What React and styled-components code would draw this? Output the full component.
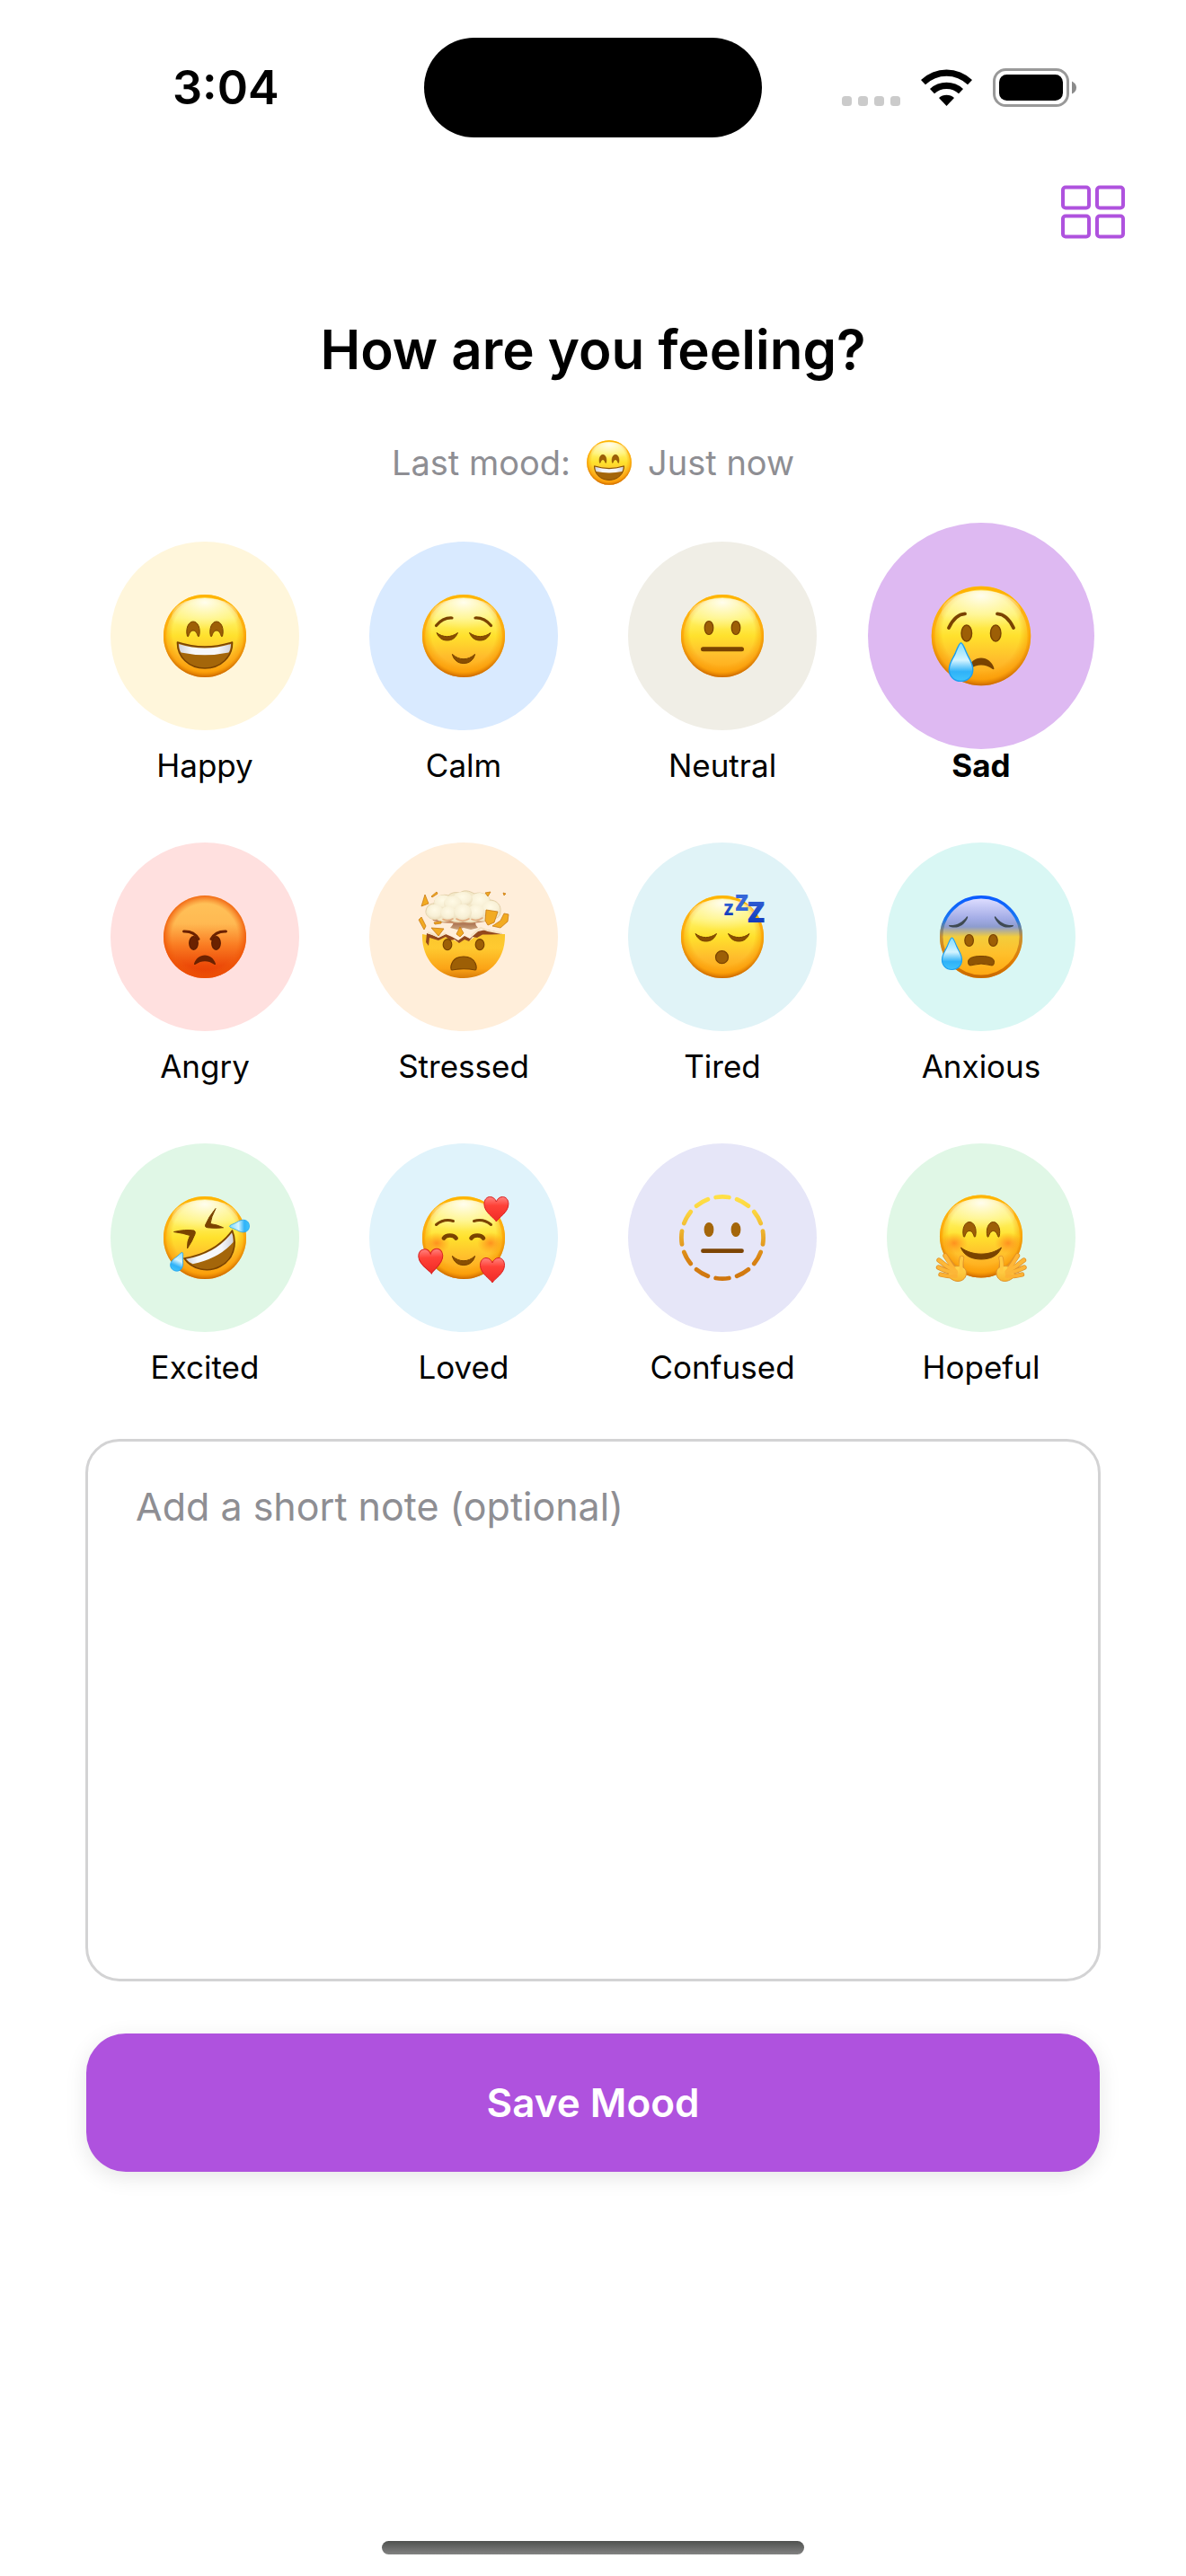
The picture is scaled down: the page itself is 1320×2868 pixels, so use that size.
import React, { useState } from "react";
import styled, { createGlobalStyle } from "styled-components";

const GlobalStyle = createGlobalStyle`
  *, *::before, *::after { box-sizing: border-box; }
  body {
    margin: 0;
    background: #fff;
    color: #000;
    font-family: Inter, Roboto, "Liberation Sans", sans-serif;
  }
  button, textarea { font: inherit; }
`;

const Screen = styled.div`
  display: flex;
  flex-direction: column;
  min-height: 100vh;
`;

const StatusBar = styled.header`
  display: grid;
  grid-template-columns: 1fr 376px 1fr;
  align-items: center;
  padding-top: 42px;
`;

const Time = styled.time`
  padding-left: 192px;
  font-size: 52px;
  font-weight: 600;
  line-height: 60px;
`;

const Island = styled.div`
  height: 111px;
  border-radius: 56px;
  background: #000;
`;

const StatusIcons = styled.div`
  display: flex;
  justify-content: flex-end;
  align-items: center;
  gap: 23px;
  padding-right: 122px;
`;

const Toolbar = styled.nav`
  display: flex;
  justify-content: flex-end;
  padding: 53px 67px 0;
`;

const IconButton = styled.button`
  display: flex;
  padding: 0;
  border: 0;
  background: none;
  color: #af52de;
  cursor: pointer;
`;

const Main = styled.main`
  display: flex;
  flex-direction: column;
  padding: 81px 95px 0;
`;

const Title = styled.h1`
  margin: 0;
  font-size: 60px;
  font-weight: 600;
  line-height: 84px;
  text-align: center;
`;

const LastMood = styled.p`
  display: flex;
  justify-content: center;
  align-items: center;
  gap: 16px;
  margin: 56px 0 0;
  color: #8e8e93;
  font-size: 38px;
  line-height: 56px;
`;

const MoodGrid = styled.div`
  display: grid;
  grid-template-columns: repeat(4, 1fr);
  gap: 60px 48px;
  margin-top: 60px;
  padding: 0 13px;
`;

const MoodButton = styled.button`
  display: flex;
  flex-direction: column;
  align-items: center;
  gap: 13px;
  padding: 0;
  border: 0;
  background: none;
  color: #000;
  cursor: pointer;
`;

const MoodCircle = styled.span`
  display: flex;
  align-items: center;
  justify-content: center;
  width: 210px;
  height: 210px;
  border-radius: 50%;
  background: ${(p) => p.$color};
  transform: ${(p) => (p.$selected ? "scale(1.2)" : "none")};
`;

const MoodLabel = styled.span`
  position: relative;
  font-size: 35px;
  font-weight: ${(p) => (p.$selected ? 700 : 400)};
  line-height: 52px;
`;

const NoteField = styled.textarea`
  display: block;
  width: 100%;
  height: 604px;
  margin-top: 54px;
  padding: 42px 53px;
  border: 3px solid #d3d3d4;
  border-radius: 38px;
  outline: none;
  resize: none;
  background: #fff;
  color: #000;
  font-size: 43px;
  line-height: 60px;
  &::placeholder { color: #8e8e93; opacity: 1; }
`;

const SaveButton = styled.button`
  height: 154px;
  margin: 58px 1px 0;
  border: 0;
  border-radius: 44px;
  background: #af52de;
  color: #fff;
  font-size: 44px;
  font-weight: 600;
  line-height: 60px;
  box-shadow: 0 6px 24px rgba(0, 0, 0, 0.1);
  cursor: pointer;
`;

const HomeIndicator = styled.div`
  width: 470px;
  height: 15px;
  margin: auto auto 24px;
  border-radius: 8px;
  background: linear-gradient(#4f514f, #828282);
`;

const FaceSvg = styled.svg`
  display: block;
  flex: none;
  overflow: visible;
`;

const Defs = styled.svg`
  position: absolute;
`;

const BROWN = "#7a4300";
const EYE = "#9d5f06";

const SharedGradients = () => (
  <Defs width="0" height="0" aria-hidden="true">
    <defs>
      <linearGradient id="skin" x1="0" y1="0" x2="0" y2="1">
        <stop offset="0" stopColor="#fff07a" />
        <stop offset="0.28" stopColor="#fff36b" />
        <stop offset="0.5" stopColor="#ffe12d" />
        <stop offset="0.75" stopColor="#ffbc2c" />
        <stop offset="1" stopColor="#ffa30d" />
      </linearGradient>
      <radialGradient id="rim" cx="0.5" cy="0.46" r="0.54">
        <stop offset="0.72" stopColor="#f59300" stopOpacity="0" />
        <stop offset="0.88" stopColor="#f89600" stopOpacity="0.5" />
        <stop offset="1" stopColor="#c96600" stopOpacity="1" />
      </radialGradient>
      <linearGradient id="rimTop" x1="0" y1="0" x2="0" y2="1">
        <stop offset="0" stopColor="#ffb400" />
        <stop offset="0.5" stopColor="#ff9d00" stopOpacity="0.5" />
        <stop offset="0.8" stopColor="#e87f00" stopOpacity="0" />
      </linearGradient>
      <radialGradient id="shine" cx="0.5" cy="0.12" r="0.75">
        <stop offset="0" stopColor="#fffef4" stopOpacity="0.95" />
        <stop offset="1" stopColor="#fffad0" stopOpacity="0" />
      </radialGradient>
      <linearGradient id="angrySkin" x1="0" y1="0" x2="0" y2="1">
        <stop offset="0" stopColor="#ffc45a" />
        <stop offset="0.34" stopColor="#ffb952" />
        <stop offset="0.6" stopColor="#fa7c22" />
        <stop offset="0.85" stopColor="#ec4a08" />
        <stop offset="1" stopColor="#e53c00" />
      </linearGradient>
      <radialGradient id="angryRim" cx="0.5" cy="0.5" r="0.5">
        <stop offset="0.8" stopColor="#f26510" stopOpacity="0" />
        <stop offset="1" stopColor="#ee5206" stopOpacity="0.8" />
      </radialGradient>
      <linearGradient id="anxiousSkin" x1="0" y1="0" x2="0" y2="1">
        <stop offset="0.04" stopColor="#dcdcff" />
        <stop offset="0.28" stopColor="#a3ace6" />
        <stop offset="0.38" stopColor="#8d9cce" />
        <stop offset="0.5" stopColor="#f3cd3c" />
        <stop offset="0.7" stopColor="#ffc02b" />
        <stop offset="1" stopColor="#ffa50f" />
      </linearGradient>
      <linearGradient id="anxiousEdge" x1="0" y1="0" x2="0" y2="1">
        <stop offset="0" stopColor="#0b5cff" />
        <stop offset="0.28" stopColor="#1878f2" />
        <stop offset="0.5" stopColor="#c99032" />
        <stop offset="0.8" stopColor="#e17c00" />
        <stop offset="1" stopColor="#c96a00" />
      </linearGradient>
      <linearGradient id="teeth" x1="0" y1="0" x2="1" y2="0">
        <stop offset="0" stopColor="#d2d3da" />
        <stop offset="0.25" stopColor="#f6f7fa" />
        <stop offset="0.75" stopColor="#f6f7fa" />
        <stop offset="1" stopColor="#d2d3da" />
      </linearGradient>
      <linearGradient id="tear" x1="0" y1="0" x2="0" y2="1">
        <stop offset="0" stopColor="#7fdcff" />
        <stop offset="0.45" stopColor="#d4f4ff" />
        <stop offset="0.75" stopColor="#2fb2f8" />
        <stop offset="1" stopColor="#3fc4fb" />
      </linearGradient>
      <radialGradient id="blush">
        <stop offset="0" stopColor="#ff7a1a" stopOpacity="0.75" />
        <stop offset="1" stopColor="#ff8a1a" stopOpacity="0" />
      </radialGradient>
      <linearGradient id="heart" x1="0" y1="0" x2="0" y2="1">
        <stop offset="0" stopColor="#ff8480" />
        <stop offset="0.35" stopColor="#ff4238" />
        <stop offset="1" stopColor="#f02a26" />
      </linearGradient>
      <linearGradient id="dashes" gradientUnits="userSpaceOnUse" x1="0" y1="4" x2="0" y2="96">
        <stop offset="0" stopColor="#ffe047" />
        <stop offset="0.2" stopColor="#fbd33f" />
        <stop offset="0.75" stopColor="#d98414" />
        <stop offset="1" stopColor="#cf760f" />
      </linearGradient>
      <radialGradient id="puff" cx="0.48" cy="0.36" r="0.64">
        <stop offset="0" stopColor="#fffae6" />
        <stop offset="0.65" stopColor="#f8f0d6" />
        <stop offset="1" stopColor="#eadbb8" />
      </radialGradient>
      <linearGradient id="stem" x1="0" y1="0" x2="0" y2="1">
        <stop offset="0" stopColor="#8f4526" />
        <stop offset="1" stopColor="#c9a27c" />
      </linearGradient>
      <linearGradient id="bowl" x1="0" y1="0" x2="0" y2="1">
        <stop offset="0" stopColor="#f9c52c" />
        <stop offset="0.35" stopColor="#ffca30" />
        <stop offset="0.8" stopColor="#fba316" />
        <stop offset="1" stopColor="#d87c0a" />
      </linearGradient>
      <linearGradient id="hand" x1="0" y1="0" x2="0" y2="1">
        <stop offset="0" stopColor="#ffd84e" />
        <stop offset="1" stopColor="#f9b42c" />
      </linearGradient>
      <linearGradient id="zed" x1="0" y1="0" x2="0" y2="1">
        <stop offset="0" stopColor="#3a6bdc" />
        <stop offset="1" stopColor="#0a2fb4" />
      </linearGradient>
    </defs>
  </Defs>
);

const Skin = ({ cy = 50 }) => (
  <g>
    <circle cx="50" cy={cy} r="46" fill="url(#skin)" />
    <circle cx="50" cy={cy} r="46" fill="url(#rim)" />
    <circle cx="50" cy={cy} r="44.5" fill="none" stroke="url(#rimTop)" strokeWidth="3" />
    <ellipse cx="50" cy={cy - 22} rx="37" ry="20" fill="url(#shine)" />
  </g>
);

const OvalEyes = ({ cy, dx = 15, rx = 5.3, ry = 8, fill = EYE, edge = BROWN }) => (
  <g fill={fill} stroke={edge} strokeWidth="1.2">
    <ellipse cx={50 - dx} cy={cy} rx={rx - 0.5} ry={ry - 0.5} />
    <ellipse cx={50 + dx} cy={cy} rx={rx - 0.5} ry={ry - 0.5} />
  </g>
);

const SmilingEye = ({ x, y }) => (
  <path
    transform={`translate(${x} ${y})`}
    d="M-6.6 8 C-8.6 0 -5.4 -8 0 -8 C5.4 -8 8.6 0 6.6 8 C6.2 9 5.6 9 5.2 8 C4 4.4 2.6 2 0 2 C-2.6 2 -4 4.4 -5.2 8 C-5.6 9 -6.2 9 -6.6 8Z"
    fill={EYE}
    stroke={BROWN}
    strokeWidth="1"
  />
);

const ClosedEyes = () => (
  <g fill="#8a4f02" stroke={BROWN} strokeWidth="1" strokeLinejoin="round">
    <path d="M20 46.5 C27 52 36 52 43.5 46.5 C41 52.5 37 55 31.7 55 C26.5 55 22.5 52.5 20 46.5Z" />
    <path d="M80 46.5 C73 52 64 52 56.5 46.5 C59 52.5 63 55 68.3 55 C73.5 55 77.5 52.5 80 46.5Z" />
  </g>
);

const SmallSmile = () => (
  <path
    d="M37.4 70.4 C45 77.5 55 77.5 62.6 70.4 C61 77 56 80.6 50 80.6 C44 80.6 39 77 37.4 70.4Z"
    fill="#8a4f02"
    stroke={BROWN}
    strokeWidth="1"
    strokeLinejoin="round"
  />
);

const Frown = ({ fill = "#7a4300" }) => (
  <path
    d="M38 80 C40 74 44.5 70.5 50 70.5 C55.5 70.5 60 74 62 80 C62.2 81.5 61 81.3 60 80.5 C54 76 46 76 40 80.5 C39 81.3 37.8 81.5 38 80Z"
    fill={fill}
  />
);

const Tear = ({ x, y, scale = 1, rotate = 0 }) => (
  <path
    transform={`translate(${x} ${y}) rotate(${rotate}) scale(${scale})`}
    d="M0 0 C1.5 0 3 4 5 9 C7.5 15 11 18.5 11 24.5 C11 31 6.5 35.5 0 35.5 C-6.5 35.5 -11 31 -11 24.5 C-11 18.5 -7.5 15 -5 9 C-3 4 -1.5 0 0 0Z"
    fill="url(#tear)"
    stroke="#1c9ff0"
    strokeWidth="1.2"
  />
);

const Heart = ({ x, y, rotate = 0 }) => (
  <path
    transform={`translate(${x} ${y}) rotate(${rotate})`}
    d="M0 14 C-2 10 -13.5 4 -13.5 -5.5 C-13.5 -10.5 -10.5 -13.5 -7 -13.5 C-3.5 -13.5 -1 -11 0 -8 C1 -11 3.5 -13.5 7 -13.5 C10.5 -13.5 13.5 -10.5 13.5 -5.5 C13.5 4 2 10 0 14Z"
    fill="url(#heart)"
    stroke="#d92020"
    strokeWidth="1"
  />
);

const Blush = ({ cy = 56 }) => (
  <g fill="url(#blush)">
    <ellipse cx="20" cy={cy} rx="15" ry="12" />
    <ellipse cx="80" cy={cy} rx="15" ry="12" />
  </g>
);

const HugHand = () => (
  <g>
    <g fill="none" stroke="#e0922a" strokeWidth="5.4" strokeLinecap="round">
      <path d="M22 86 Q15 78 10 70" />
      <path d="M20 87 Q11 82 3 75" />
      <path d="M19 89 Q10 87 2.5 83" />
      <path d="M20 93 Q12 93 5 91" />
      <path d="M29 86 Q27 78 28.500 72.500" />
    </g>
    <path d="M18 83 C24 80 33 82 33.5 88 C34 94 30 98.5 24 98.5 C19 98.5 13 94 13 91Z" fill="url(#hand)" stroke="#e0922a" strokeWidth="1" />
    <g fill="none" strokeWidth="3.8" strokeLinecap="round">
      <path d="M22 88 Q15 79 10 70" stroke="#ffb636" />
      <path d="M22 88 Q11 82 3 75" stroke="#fdb838" />
      <path d="M22 90 Q10 87 2.5 83" stroke="#fcb638" />
      <path d="M22 93 Q12 93 5 91" stroke="#fcb234" />
      <path d="M28 88 Q27 78 28.5 72.5" stroke="#ffc840" />
    </g>
  </g>
);

const faces = {
  Happy: (
    <>
      <Skin />
      <SmilingEye x={37} y={42} />
      <SmilingEye x={63} y={42} />
      <path d="M19.5 57 Q50 67 80.5 57 C81 73 68 86 50 86 C32 86 19 73 19.5 57Z" fill="#a4660a" stroke={BROWN} strokeWidth="1.6" strokeLinejoin="round" />
      <path d="M21 59 Q50 68 79 59 C78.8 63 78 66.5 76.5 68.5 Q50 74 23.5 68.5 C22 66.5 21.2 63 21 59Z" fill="url(#teeth)" />
    </>
  ),
  Calm: (
    <>
      <Skin />
      <g fill="none" stroke={BROWN} strokeWidth="3.2" strokeLinecap="round">
        <path d="M19.5 38.5 Q27 29.5 37 30" />
        <path d="M80.5 38.5 Q73 29.5 63 30" />
      </g>
      <ClosedEyes />
      <SmallSmile />
    </>
  ),
  Neutral: (
    <>
      <Skin />
      <OvalEyes cy={41} />
      <path d="M28.5 64.7 H71.5" stroke={BROWN} strokeWidth="5" strokeLinecap="round" />
    </>
  ),
  Sad: (
    <>
      <Skin />
      <g fill="none" stroke={BROWN} strokeWidth="3.2" strokeLinecap="round">
        <path d="M20 42.5 Q26 30 35 29.5" />
        <path d="M80 42.5 Q74 30 65 29.5" />
      </g>
      <OvalEyes cy={47.5} dx={13.5} />
      <Frown />
      <Tear x={31.3} y={56.5} />
    </>
  ),
  Angry: (
    <>
      <circle cx="50" cy="50" r="46" fill="url(#angrySkin)" />
      <circle cx="50" cy="50" r="46" fill="url(#angryRim)" />
      <OvalEyes cy={57} dx={12.5} ry={7.8} fill="#6b2100" edge="#5c1c00" />
      <g fill="none" stroke="#6b2100" strokeWidth="3" strokeLinecap="round">
        <path d="M26.5 44 Q38 43.5 43 52.5" />
        <path d="M73.5 44 Q62 43.5 57 52.5" />
      </g>
      <Frown fill="#6b2100" />
    </>
  ),
  Stressed: (
    <>
      <path d="M4 47 L14 49 L22 53 L30 50 L36 52 L44 56 L51 51 L57 54 L66 47 L75 44 L85 47 L96 47 C97 76 77 96 50 96 C23 96 3 76 4 47Z" fill="url(#bowl)" />
      <path d="M9 46 L15 48 L22 51 L30 47 L37 50 L44 54 L51 49 L57 52 L66 44 L75 42 L85 44 L93 47 L80 47.500 L71 47.500 L65 51 L60 50 L56 55 L51 53 L45 57 L40 53 L35 54 L30 50 L22 54 L12 51 L11 60 L8 56Z" fill="#93481d" />
      <path d="M10 45 L16 47 L22 50 L30 46 M58 49 L69 40 L77 43 L92 46" fill="none" stroke="#f6e3c4" strokeWidth="2" />
      <path d="M39 28 H64 Q61 35 66 40 L58 42 L50 40 L43 42 L35 40 Q40 36 39 28Z" fill="url(#stem)" />
      <path d="M12 24 Q50 38 86 24 L80 31 Q66 36 50 34.500 Q28 36 16 32Z" fill="#c98f68" />
      <path d="M17 13 C18 4 28 2 33 4 C38 -1 44 1 46 1 C52 -4 60 1 62 2 C70 -1 79 4 79 9 C87 9 92 15 91 22 C91 28 86 31 80 29 C76 34 69 33 66 32 C61 35 54 34 49 33 C43 35 37 33 35 31 C29 35 22 33 20 30 C12 32 7 25 8 21 C9 15 13 13 17 13Z" fill="#f3e8c8" stroke="#dcc79c" strokeWidth="0.8" />
      <g fill="url(#puff)">
        <ellipse cx="27" cy="11.5" rx="10" ry="8" />
        <ellipse cx="68" cy="11" rx="11.5" ry="10" />
        <ellipse cx="49" cy="8" rx="11" ry="8" />
        <ellipse cx="80" cy="19.500" rx="10.500" ry="9.500" />
        <ellipse cx="18" cy="22.500" rx="9.500" ry="8.500" />
        <ellipse cx="38" cy="13" rx="10" ry="8.5" />
        <ellipse cx="33" cy="24" rx="9" ry="8" />
        <ellipse cx="64" cy="23" rx="9.500" ry="9" />
        <ellipse cx="49" cy="23" rx="10" ry="9.5" />
      </g>
      <path d="M42 30 Q49 34 56 30 M27 30.500 Q32 33 38 30 M59 30.500 Q65 33 71 29" fill="none" stroke="#e2ac80" strokeWidth="1.6" strokeLinecap="round" />
      <g fill="#f2ab22" stroke="#c97a12" strokeWidth="0.8" strokeLinejoin="round">
        <path d="M3 16 L7 3 L11 13Z" />
        <path d="M14 5 L20 0 L21 2 L15 6Z" />
        <path d="M74 1 L80 0 L77 5Z" />
        <path d="M94 1 L97 2 L95 4Z" />
        <path d="M75 20 L88 22 L84 34 L77 37 L74 32Z" />
        <path d="M82 38 L91 32 L95 24 L100 25 L99 33 L91 40Z" />
        <path d="M0 31 L3 28 L8 38 L6 42Z" />
        <path d="M14 40 L28 41 L22 49Z" />
        <path d="M42 47 L46 39 L50 46 L46 50Z" />
        <path d="M17 34 L25 33 L25 35 L18 36Z" />
      </g>
      <OvalEyes cy={58.7} dx={18} ry={6.5} />
      <path d="M37 87 C34.5 87 35 72 50 72 C65 72 65.5 87 63 87 Q50 84.5 37 87Z" fill={EYE} stroke={BROWN} strokeWidth="1.2" />
    </>
  ),
  Tired: (
    <>
      <Skin />
      <ClosedEyes />
      <ellipse cx="49.5" cy="72.7" rx="7" ry="7" fill={EYE} stroke={BROWN} strokeWidth="1.2" />
      <g fill="url(#zed)" fontFamily="'Open Sans', sans-serif" fontWeight="800" textAnchor="middle">
        <text x="57" y="26" fontSize="17">Z</text>
        <text x="71.5" y="21" fontSize="24" fill="#3566d8">Z</text>
        <text x="87.5" y="34" fontSize="32">Z</text>
      </g>
    </>
  ),
  Anxious: (
    <>
      <circle cx="50" cy="50" r="46" fill="url(#anxiousSkin)" />
      <circle cx="50" cy="50" r="44.3" fill="none" stroke="url(#anxiousEdge)" strokeWidth="3.4" />
      <g fill="#3f4a52">
        <path d="M14.5 37 C23 37.5 29 34 34 27.5 C35 27 35.5 28 35 29 C31 37.5 24 41 16 39 C14 38.5 13.5 37.3 14.5 37Z" />
        <path d="M85.5 37 C77 37.5 71 34 66 27.5 C65 27 64.5 28 65 29 C69 37.5 76 41 84 39 C86 38.5 86.5 37.3 85.5 37Z" />
      </g>
      <OvalEyes cy={54} dx={13.4} ry={7} />
      <path d="M36 80.5 C33.5 74 40 71.5 50 71.5 C60 71.5 66.5 74 64 80.5 C63.5 82.5 61 82 59 81.3 Q50 78.8 41 81.3 C39 82 36.5 82.5 36 80.5Z" fill="#8f5404" stroke={BROWN} strokeWidth="1" />
      <Tear x={17.5} y={51} />
    </>
  ),
  Excited: (
    <>
      <Skin />
      <g fill={BROWN} stroke={BROWN} strokeWidth="1" strokeLinejoin="round">
        <path d="M15.5 43.5 Q28 40.5 38 42 Q40 43 39 46 Q36 54 30.5 62 Q30 54 33.5 47.5 Q26 45 15.5 43.5Z" />
        <path d="M62 17.5 Q54 27 50.5 36 Q50 38.5 53 38.8 Q62 39.8 70.5 38.8 Q64 35.5 56 34.5 Q57 27 62 17.5Z" />
      </g>
      <path d="M27 73 Q62 67 80.5 42 C87 58 81 75 67 82 C54 89 36 86 27 73Z" fill="#a4660a" stroke={BROWN} strokeWidth="1.6" strokeLinejoin="round" />
      <path d="M29 73.8 Q62 68 80 44.5 Q82 49 81.5 55 Q66 73 36.5 79.3 Q32 77.5 29 73.8Z" fill="url(#teeth)" />
      <Tear x={77.5} y={37.3} scale={0.62} rotate={-91} />
      <Tear x={25} y={66.5} scale={0.62} rotate={25} />
    </>
  ),
  Loved: (
    <>
      <Skin />
      <Blush />
      <g fill="none" stroke={BROWN} strokeLinecap="round" strokeWidth="3">
        <path d="M19.5 35.5 Q28 28.5 38.5 31.5" />
        <path d="M80.5 35.5 Q72 28.5 61.5 31.5" />
        <path d="M28 50.5 C30.5 46.5 39 46.5 41.5 50.5" strokeWidth="4.6" />
        <path d="M58.5 50.5 C61 46.5 69.5 46.5 72 50.5" strokeWidth="4.6" />
      </g>
      <SmallSmile />
      <Heart x={86.4} y={18} />
      <Heart x={13.6} y={76} rotate={-3} />
      <Heart x={82} y={86} />
    </>
  ),
  Confused: (
    <>
      <circle cx="50" cy="50" r="45.6" fill="none" stroke="url(#dashes)" strokeWidth="4.8" strokeLinecap="round" pathLength="120" strokeDasharray="6.2 3.8" strokeDashoffset="3.1" />
      <OvalEyes cy={41} fill="#a4660a" edge="#a4660a" />
      <path d="M28.5 64.7 H71.5" stroke="#7d4505" strokeWidth="4.8" strokeLinecap="round" />
    </>
  ),
  Hopeful: (
    <>
      <Skin cy={48.5} />
      <Blush />
      <SmilingEye x={37} y={40.5} />
      <SmilingEye x={63.5} y={40.5} />
      <path d="M27.5 61 C40 70.5 60 70.5 72.5 61 C69 70.5 60 74 50 74 C40 74 31 70.5 27.5 61Z" fill="#7a4300" stroke={BROWN} strokeWidth="1" strokeLinejoin="round" />
      <HugHand />
      <g transform="translate(100.5 0) scale(-1 1)">
        <HugHand />
      </g>
    </>
  ),
};

const Face = ({ name, size }) => (
  <FaceSvg width={size} height={size} viewBox="0 0 100 100" aria-hidden="true">
    {faces[name]}
  </FaceSvg>
);

const moods = [
  { name: "Happy", color: "#fff6db" },
  { name: "Calm", color: "#d9eaff" },
  { name: "Neutral", color: "#f0eee6" },
  { name: "Sad", color: "#deb9f2" },
  { name: "Angry", color: "#ffe0df" },
  { name: "Stressed", color: "#ffeeda" },
  { name: "Tired", color: "#e0f3f7" },
  { name: "Anxious", color: "#d9f7f4" },
  { name: "Excited", color: "#e0f7e6" },
  { name: "Loved", color: "#e0f3fb" },
  { name: "Confused", color: "#e6e6f8" },
  { name: "Hopeful", color: "#e0f7e6" },
];

const SignalDots = () => (
  <svg width="65" height="43" viewBox="0 0 65 43" fill="#cbcbcb" aria-hidden="true">
    {[0, 18, 36, 54].map((x) => (
      <rect key={x} x={x} y="31" width="11" height="11" rx="3.5" />
    ))}
  </svg>
);

const Wifi = () => (
  <svg width="57" height="43" viewBox="0 0 57 43" aria-hidden="true">
    <path d="M0 13 A41 41 0 0 1 57 13 L52 18.3 A34 34 0 0 0 5 18.3Z" />
    <path d="M10 23 A27 27 0 0 1 47 23 L42 28.3 A20 20 0 0 0 15 28.3Z" />
    <path d="M20 33 A13 13 0 0 1 37 33 L28.5 42Z" />
  </svg>
);

const Battery = () => (
  <svg width="93" height="43" viewBox="0 0 93 43" aria-hidden="true">
    <rect x="1.5" y="1.5" width="82" height="40" rx="13" fill="none" stroke="#999" strokeWidth="3" />
    <rect x="7" y="7" width="71" height="29" rx="8.5" />
    <path d="M88 14.5 Q93 17 93 21.5 Q93 26 88 28.5Z" fill="#8a8a8a" />
  </svg>
);

const GridIcon = () => (
  <svg width="72" height="60" viewBox="0 0 72 60" fill="none" stroke="currentColor" strokeWidth="4" aria-hidden="true">
    {[2, 40].map((x) =>
      [2.5, 34.5].map((y) => <rect key={`${x}-${y}`} x={x} y={y} width="29" height="23" rx="3" />)
    )}
  </svg>
);

export default function App() {
  const [selected, setSelected] = useState("Sad");
  const [note, setNote] = useState("");

  return (
    <Screen>
      <GlobalStyle />
      <SharedGradients />
      <StatusBar>
        <Time>3:04</Time>
        <Island />
        <StatusIcons>
          <SignalDots />
          <Wifi />
          <Battery />
        </StatusIcons>
      </StatusBar>
      <Toolbar>
        <IconButton type="button" aria-label="Mood history">
          <GridIcon />
        </IconButton>
      </Toolbar>
      <Main>
        <Title>How are you feeling?</Title>
        <LastMood>
          <span>Last mood:</span>
          <Face name="Happy" size={54} />
          <span>Just now</span>
        </LastMood>
        <MoodGrid>
          {moods.map(({ name, color }) => (
            <MoodButton
              key={name}
              type="button"
              aria-pressed={selected === name}
              onClick={() => setSelected(name)}
            >
              <MoodCircle $color={color} $selected={selected === name}>
                <Face name={name} size={100} />
              </MoodCircle>
              <MoodLabel $selected={selected === name}>{name}</MoodLabel>
            </MoodButton>
          ))}
        </MoodGrid>
        <NoteField
          aria-label="Note"
          placeholder="Add a short note (optional)"
          value={note}
          onChange={(e) => setNote(e.target.value)}
        />
        <SaveButton type="button">Save Mood</SaveButton>
      </Main>
      <HomeIndicator />
    </Screen>
  );
}
